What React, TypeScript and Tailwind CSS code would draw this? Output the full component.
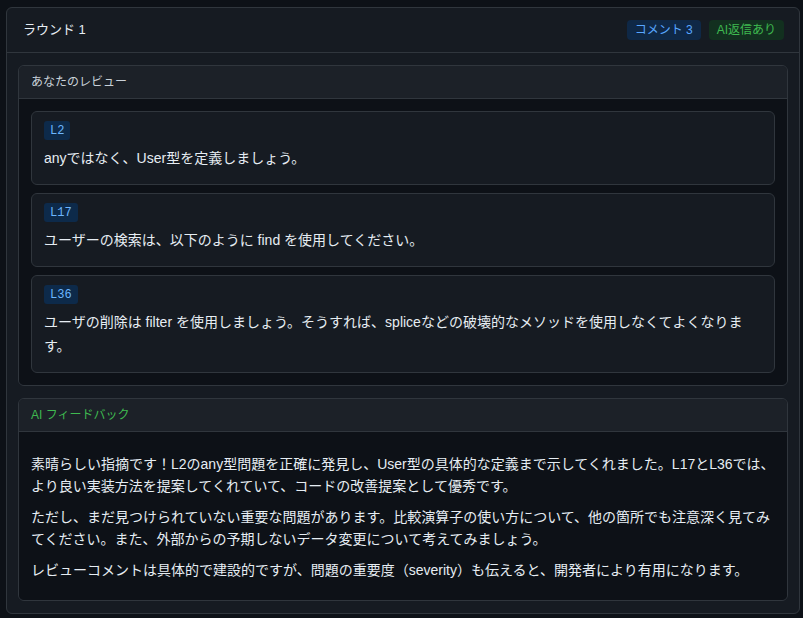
import React from 'react';

type ReviewComment = {
  line: string;
  body: string;
};

const comments: ReviewComment[] = [
  { line: 'L2', body: 'anyではなく、User型を定義しましょう。' },
  { line: 'L17', body: 'ユーザーの検索は、以下のように find を使用してください。' },
  {
    line: 'L36',
    body: 'ユーザの削除は filter を使用しましょう。そうすれば、spliceなどの破壊的なメソッドを使用しなくてよくなります。',
  },
];

const feedback = [
  '素晴らしい指摘です！L2のany型問題を正確に発見し、User型の具体的な定義まで示してくれました。L17とL36では、より良い実装方法を提案してくれていて、コードの改善提案として優秀です。',
  'ただし、まだ見つけられていない重要な問題があります。比較演算子の使い方について、他の箇所でも注意深く見てみてください。また、外部からの予期しないデータ変更について考えてみましょう。',
  'レビューコメントは具体的で建設的ですが、問題の重要度（severity）も伝えると、開発者により有用になります。',
];

function CommentCard({ comment }: { comment: ReviewComment }) {
  return (
    <div className="rounded-md border border-[#30363d] bg-[#161b22] px-3 pt-[9px] pb-[14px]">
      <span className="mb-1.5 flex h-[19px] w-fit items-center rounded-[3px] bg-[#0d2a4a] px-1.5 font-['Liberation_Mono',monospace] text-xs text-[#6cb6ff]">
        {comment.line}
      </span>
      <p className="text-sm leading-6 text-[#e6edf3]">{comment.body}</p>
    </div>
  );
}

function Section({
  title,
  titleClass,
  children,
}: {
  title: string;
  titleClass: string;
  children: React.ReactNode;
}) {
  return (
    <div className="overflow-hidden rounded-md border border-[#30363d]">
      <div
        className={`flex h-[33px] items-center border-b border-[#30363d] bg-[#1c2128] px-3 text-xs ${titleClass}`}
      >
        {title}
      </div>
      {children}
    </div>
  );
}

export default function App() {
  return (
    <div className="min-h-screen bg-[#0d1117] pt-[7px] pb-[5px] pl-[6px] pr-[3px] font-['Liberation_Sans','Noto_Sans_CJK_JP',sans-serif]">
      <div className="rounded-md border border-[#30363d] bg-[#161b22]">
        <div className="flex h-[45px] items-center justify-between border-b border-[#30363d] pl-4 pr-[15px]">
          <h3 className="text-[13px] text-[#e6edf3]">ラウンド 1</h3>
          <div className="flex gap-2">
            <span className="inline-flex h-5 items-center rounded bg-[#0f2846] px-2 text-xs text-[#58a6ff]">
              コメント 3
            </span>
            <span className="inline-flex h-5 items-center rounded bg-[#12301f] px-2 text-xs text-[#3fb950]">
              AI返信あり
            </span>
          </div>
        </div>

        <div className="space-y-3 px-[11px] pt-3 pb-3">
          <Section title="あなたのレビュー" titleClass="text-[#c9d1d9]">
            <div className="space-y-2 bg-[#0d1117] p-3">
              {comments.map((c) => (
                <CommentCard key={c.line} comment={c} />
              ))}
            </div>
          </Section>

          <Section title="AI フィードバック" titleClass="text-[#3fb950]">
            <div className="space-y-[9px] bg-[#0d1117] px-3 pt-[21px] pb-[19px]">
              {feedback.map((text, i) => (
                <p key={i} className="text-sm leading-[22px] text-[#e6edf3]">
                  {text}
                </p>
              ))}
            </div>
          </Section>
        </div>
      </div>
    </div>
  );
}
